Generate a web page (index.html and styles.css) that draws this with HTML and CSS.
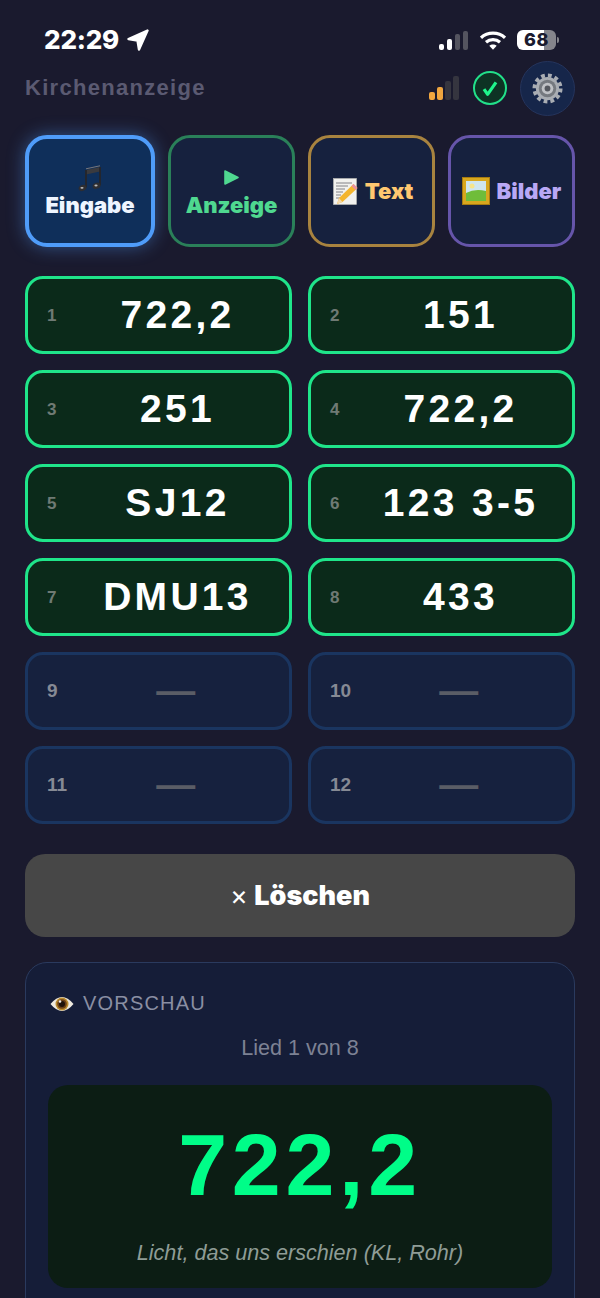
FILE: index.html
```html
<!DOCTYPE html>
<html lang="de">
<head>
  <meta charset="UTF-8">
  <meta name="viewport" content="width=device-width, initial-scale=1.0">
  <title>Kirchenanzeige</title>
  <link rel="stylesheet" href="styles.css">
</head>
<body>
  <div class="statusbar">
    <div class="status-left">
      <span class="clock">22:29</span>
      <svg class="location" viewBox="0 0 22 22"><path d="M20.500 1.500 L1.500 10 L10.500 11.500 L12 20.500 Z" fill="#fff" stroke="#fff" stroke-width="2.400" stroke-linejoin="round"/></svg>
    </div>
    <div class="status-right">
      <div class="cell-bars">
        <i class="b1 on"></i><i class="b2 on"></i><i class="b3"></i><i class="b4"></i>
      </div>
      <svg class="wifi" viewBox="0 0 26 19">
        <path d="M1 6.800 C7.500 .6 18.500 .6 25 6.800 M6 11.300 C10 7.800 16 7.800 20 11.300" fill="none" stroke="#fff" stroke-width="3.200"/>
        <path d="M9.300 14.800 C11.300 13 14.700 13 16.700 14.800 L13 18.800 Z" fill="#fff"/>
      </svg>
      <div class="battery"><span class="battery-level">68</span></div>
      <i class="battery-nub"></i>
    </div>
  </div>

  <main class="page">
    <header class="topbar">
      <h1 class="app-title">Kirchenanzeige</h1>
      <div class="topbar-tools">
        <div class="signal">
          <i class="s1 on"></i><i class="s2 on"></i><i class="s3"></i><i class="s4"></i>
        </div>
        <div class="conn-ok">
          <svg viewBox="0 0 20 20"><path d="M4 11.200 L7.600 16.300 L16 4.300" fill="none" stroke="#1ff58c" stroke-width="3.200" stroke-linejoin="round"/></svg>
        </div>
        <button class="gear-btn">
          <svg viewBox="0 0 32 32">
            <circle cx="16" cy="16" r="13.500" fill="none" stroke="#a9adb3" stroke-width="4" stroke-dasharray="3.900 3.170"/>
            <circle cx="16" cy="16" r="12" fill="#a9adb3"/>
            <circle cx="16" cy="16" r="9" fill="#75797f"/>
            <circle cx="16" cy="16" r="6" fill="#bfc1c5"/>
            <circle cx="16" cy="16" r="3" fill="#55585f"/>
          </svg>
        </button>
      </div>
    </header>

    <nav class="tabs">
      <button class="tab tab-stack tab-input">
        <svg class="tab-icon" viewBox="0 0 24 27">
          <path d="M8 5 L22 2 L22 6.500 L8 9.500 Z" fill="#3a3a3e"/>
          <path d="M8 3.800 L22 .8" stroke="#77777c" stroke-width="1"/>
          <path d="M8 5 V22.500 M22 2 V20.500" stroke="#26262a" stroke-width="1.800" fill="none"/>
          <ellipse cx="4.500" cy="23" rx="4" ry="3" fill="#2e2e32" transform="rotate(-20 4.500 23)"/>
          <ellipse cx="18.500" cy="20.800" rx="4" ry="3" fill="#2e2e32" transform="rotate(-20 18.500 20.800)"/>
          <ellipse cx="4" cy="22.800" rx="1.600" ry=".9" fill="#bbb"/>
          <ellipse cx="18" cy="20.500" rx="1.600" ry=".9" fill="#bbb"/>
        </svg>
        <span>Eingabe</span>
      </button>
      <button class="tab tab-stack tab-show">
        <svg class="tab-icon play" viewBox="0 0 15 15"><path d="M1 1 L14 7.500 L1 14 Z" fill="#4fd890" stroke="#4fd890" stroke-width="1.600" stroke-linejoin="round"/></svg>
        <span>Anzeige</span>
      </button>
      <button class="tab tab-text">
        <svg class="tab-emoji memo" viewBox="0 0 25 27">
          <rect x="0.500" y="0.500" width="23" height="26" fill="#f1f1ee" stroke="#bdbdb8" stroke-width=".6"/>
          <path d="M3 5h16M3 8h12M3 11h9M3 14h7M3 17h5M3 20h4" stroke="#77777c" stroke-width=".9"/>
          <path d="M20.500 6 L24.500 10 L9.500 24 L4 26 L6 20 Z" fill="#f4b52e"/>
          <path d="M20.500 6 L24.500 10 L22.500 12 L18.500 8 Z" fill="#e891a0"/>
          <path d="M6 20 L9.500 24 L4 26 Z" fill="#f3d9ad"/>
        </svg>
        <span>Text</span>
      </button>
      <button class="tab tab-images">
        <svg class="tab-emoji" viewBox="0 0 28 28">
          <rect x="0.500" y="0.500" width="27" height="27" fill="#d8a71e" stroke="#a87c10"/>
          <rect x="4" y="4" width="20" height="20" fill="#cfe6ee"/>
          <path d="M4 16 Q13 11 24 14 V24 H4 Z" fill="#6fbd3a"/>
          <circle cx="10" cy="9" r="2.500" fill="#f6e58a"/>
        </svg>
        <span>Bilder</span>
      </button>
    </nav>

    <section class="slots">
      <div class="slot filled"><span class="slot-num">1</span><span class="slot-val">722,2</span></div>
      <div class="slot filled"><span class="slot-num">2</span><span class="slot-val">151</span></div>
      <div class="slot filled"><span class="slot-num">3</span><span class="slot-val">251</span></div>
      <div class="slot filled"><span class="slot-num">4</span><span class="slot-val">722,2</span></div>
      <div class="slot filled"><span class="slot-num">5</span><span class="slot-val">SJ12</span></div>
      <div class="slot filled"><span class="slot-num">6</span><span class="slot-val">123 3-5</span></div>
      <div class="slot filled"><span class="slot-num">7</span><span class="slot-val">DMU13</span></div>
      <div class="slot filled"><span class="slot-num">8</span><span class="slot-val">433</span></div>
      <div class="slot"><span class="slot-num">9</span><span class="slot-val">—</span></div>
      <div class="slot"><span class="slot-num">10</span><span class="slot-val">—</span></div>
      <div class="slot"><span class="slot-num">11</span><span class="slot-val">—</span></div>
      <div class="slot"><span class="slot-num">12</span><span class="slot-val">—</span></div>
    </section>

    <button class="clear-btn"><span class="clear-x">×</span> Löschen</button>

    <section class="preview">
      <div class="preview-head">
        <svg class="eye" viewBox="0 0 24 20">
          <path d="M0.500 10 Q12 -4 23.500 10 Q12 24 0.500 10 Z" fill="#efeae0"/>
          <circle cx="12" cy="10" r="6.500" fill="#b98a2e"/>
          <circle cx="12" cy="10" r="4.800" fill="#6b3f17"/>
          <circle cx="12" cy="10" r="3" fill="#1f120a"/>
          <circle cx="10" cy="7.500" r="1.300" fill="#eee"/>
        </svg>
        <span>VORSCHAU</span>
      </div>
      <p class="preview-count">Lied 1 von 8</p>
      <div class="preview-box">
        <div class="preview-num">722,2</div>
        <div class="preview-title">Licht, das uns erschien (KL, Rohr)</div>
      </div>
    </section>
  </main>
</body>
</html>
```

FILE: styles.css
```css
html, body {
  height: 1298px;
  overflow: hidden;
}
body {
  margin: 0;
  background: #1a1a2e;
  font-family: "Liberation Sans", Arial, sans-serif;
  color: #fff;
}
button {
  font: inherit;
  color: inherit;
  padding: 0;
}

/* status bar */
.statusbar {
  height: 61px;
  padding: 0 41px 0 44px;
  display: flex;
  justify-content: space-between;
  align-items: flex-start;
}
.status-left {
  display: flex;
  align-items: center;
  gap: 8px;
  padding-top: 24px;
}
.clock {
  font-family: Inter, sans-serif;
  font-weight: 800;
  font-size: 26px;
  line-height: 31px;
  letter-spacing: -0.2px;
}
.location {
  width: 22px;
  height: 22px;
}
.status-right {
  display: flex;
  align-items: center;
  padding-top: 30px;
}
.cell-bars {
  display: flex;
  align-items: flex-end;
  gap: 3px;
  height: 19px;
  margin-right: 12px;
}
.cell-bars i {
  width: 5px;
  border-radius: 2px;
  background: #54545f;
}
.cell-bars i.on { background: #fff; }
.b1 { height: 6px; }
.b2 { height: 11px; }
.b3 { height: 16px; }
.b4 { height: 19px; }
.wifi {
  width: 26px;
  height: 19px;
  margin-right: 11px;
}
.battery {
  width: 39px;
  height: 20px;
  border-radius: 6px;
  background: linear-gradient(90deg, #fff 70%, #85858c 70%);
  color: #1a1a2e;
  font-family: Inter, sans-serif;
  font-weight: 800;
  font-size: 18px;
  line-height: 20px;
  text-align: center;
  letter-spacing: 0.5px;
}
.battery-nub {
  width: 2px;
  height: 6px;
  margin-left: 1px;
  background: #85858c;
  border-radius: 0 2px 2px 0;
}

/* page */
.page {
  padding: 0 25px;
}
.topbar {
  height: 54px;
  display: flex;
  align-items: center;
  justify-content: space-between;
}
.app-title {
  margin: 0;
  font-size: 22px;
  font-weight: 700;
  letter-spacing: 1.3px;
  color: #5b5a72;
}
.topbar-tools {
  display: flex;
  align-items: center;
}
.signal {
  display: flex;
  align-items: flex-end;
  gap: 2px;
  height: 24px;
  margin: 0 14px 0 0;
}
.signal i {
  width: 6px;
  border-radius: 2px;
  background: #35353f;
}
.signal i.on { background: #f0a63f; }
.s1 { height: 8px; }
.s2 { height: 13px; }
.s3 { height: 19px; }
.s4 { height: 24px; }
.conn-ok {
  width: 30px;
  height: 30px;
  border: 2px solid #22e08a;
  border-radius: 50%;
  background: #0d3324;
  display: flex;
  align-items: center;
  justify-content: center;
  margin-right: 13px;
}
.conn-ok svg {
  width: 20px;
  height: 20px;
}
.gear-btn {
  width: 55px;
  height: 55px;
  border: 1px solid #25345c;
  border-radius: 50%;
  background: #16264a;
  display: flex;
  align-items: center;
  justify-content: center;
}
.gear-btn svg {
  width: 31px;
  height: 31px;
}

/* tabs */
.tabs {
  margin-top: 20px;
  display: grid;
  grid-template-columns: 130px 127px 127px 127px;
  gap: 13px;
}
.tab {
  height: 112px;
  box-sizing: border-box;
  border: 3px solid;
  border-radius: 22px;
  background: #16213e;
  font-family: Inter, sans-serif;
  font-weight: 900;
  font-size: 22px;
  line-height: 26px;
  display: flex;
  align-items: center;
  justify-content: center;
  gap: 7px;
}
.tab-stack {
  flex-direction: column;
  gap: 0;
}
.tab-icon {
  width: 24px;
  height: 27px;
}
.tab-icon.play {
  width: 15px;
  height: 15px;
  margin: 0 0 7px;
}
.tab-emoji {
  width: 28px;
  height: 28px;
  flex: none;
}
.tab-emoji.memo {
  width: 25px;
  height: 27px;
}
.tab-input {
  border: 4px solid #4f9cf9;
  background: #0f2f5a;
  color: #eef5ff;
  box-shadow: 0 0 18px rgba(79, 156, 249, 0.45);
}
.tab-show {
  padding-top: 6px;
  border-color: #2a8059;
  color: #4fd890;
}
.tab-text {
  padding-left: 3px;
  border-color: #a8833f;
  color: #ffc870;
}
.tab-images {
  border-color: #6655aa;
  color: #b9a8f5;
}

/* song slots */
.slots {
  margin-top: 29px;
  display: grid;
  grid-template-columns: 1fr 1fr;
  gap: 16px;
}
.slot {
  height: 78px;
  box-sizing: border-box;
  border: 3px solid #1a3560;
  border-radius: 18px;
  background: #16213e;
  padding: 0 1px 0 19px;
  display: flex;
  align-items: center;
}
.slot-num {
  width: 20px;
  font-size: 19px;
  line-height: 21px;
  margin-top: -2px;
  font-weight: 700;
  white-space: nowrap;
  color: #868a94;
}
.slot-val {
  flex: 1;
  text-align: center;
  font-size: 39px;
  line-height: 44px;
  font-weight: 700;
  letter-spacing: 3.3px;
  color: #5a5d66;
}
.slot.filled {
  border-color: #1fe58a;
  background: #0b2a1a;
}
.slot.filled .slot-num {
  font-size: 17px;
  margin-top: 0;
  color: #6f7a74;
}
.slot.filled .slot-val {
  color: #fff;
}

.clear-btn {
  display: block;
  width: 100%;
  height: 83px;
  margin-top: 30px;
  border: 0;
  border-radius: 20px;
  background: #474747;
  font-family: Inter, sans-serif;
  font-weight: 900;
  font-size: 27px;
  color: #fff;
}
.clear-x {
  font-weight: 400;
  margin-right: 1px;
}

/* preview */
.preview {
  margin-top: 25px;
  box-sizing: border-box;
  height: 400px;
  padding: 29px 22px 22px;
  border: 1px solid #2a3a5e;
  border-radius: 22px;
  background: #151d38;
}
.preview-head {
  display: flex;
  align-items: center;
  gap: 9px;
  padding-left: 2px;
  font-size: 20px;
  line-height: 23px;
  letter-spacing: 1.2px;
  color: #8a8fa3;
}
.eye {
  width: 24px;
  height: 20px;
}
.preview-count {
  margin: 20px 0 0;
  text-align: center;
  font-size: 21.6px;
  line-height: 25px;
  color: #7d8294;
}
.preview-box {
  margin-top: 25px;
  height: 203px;
  border-radius: 20px;
  background: #0c1d14;
  text-align: center;
}
.preview-num {
  padding-top: 29px;
  font-size: 88px;
  line-height: 101px;
  font-weight: 700;
  letter-spacing: 4.7px;
  color: #00fd88;
}
.preview-title {
  margin-top: 25px;
  font-size: 21.6px;
  line-height: 25px;
  font-style: italic;
  color: #8f9c96;
}
```
